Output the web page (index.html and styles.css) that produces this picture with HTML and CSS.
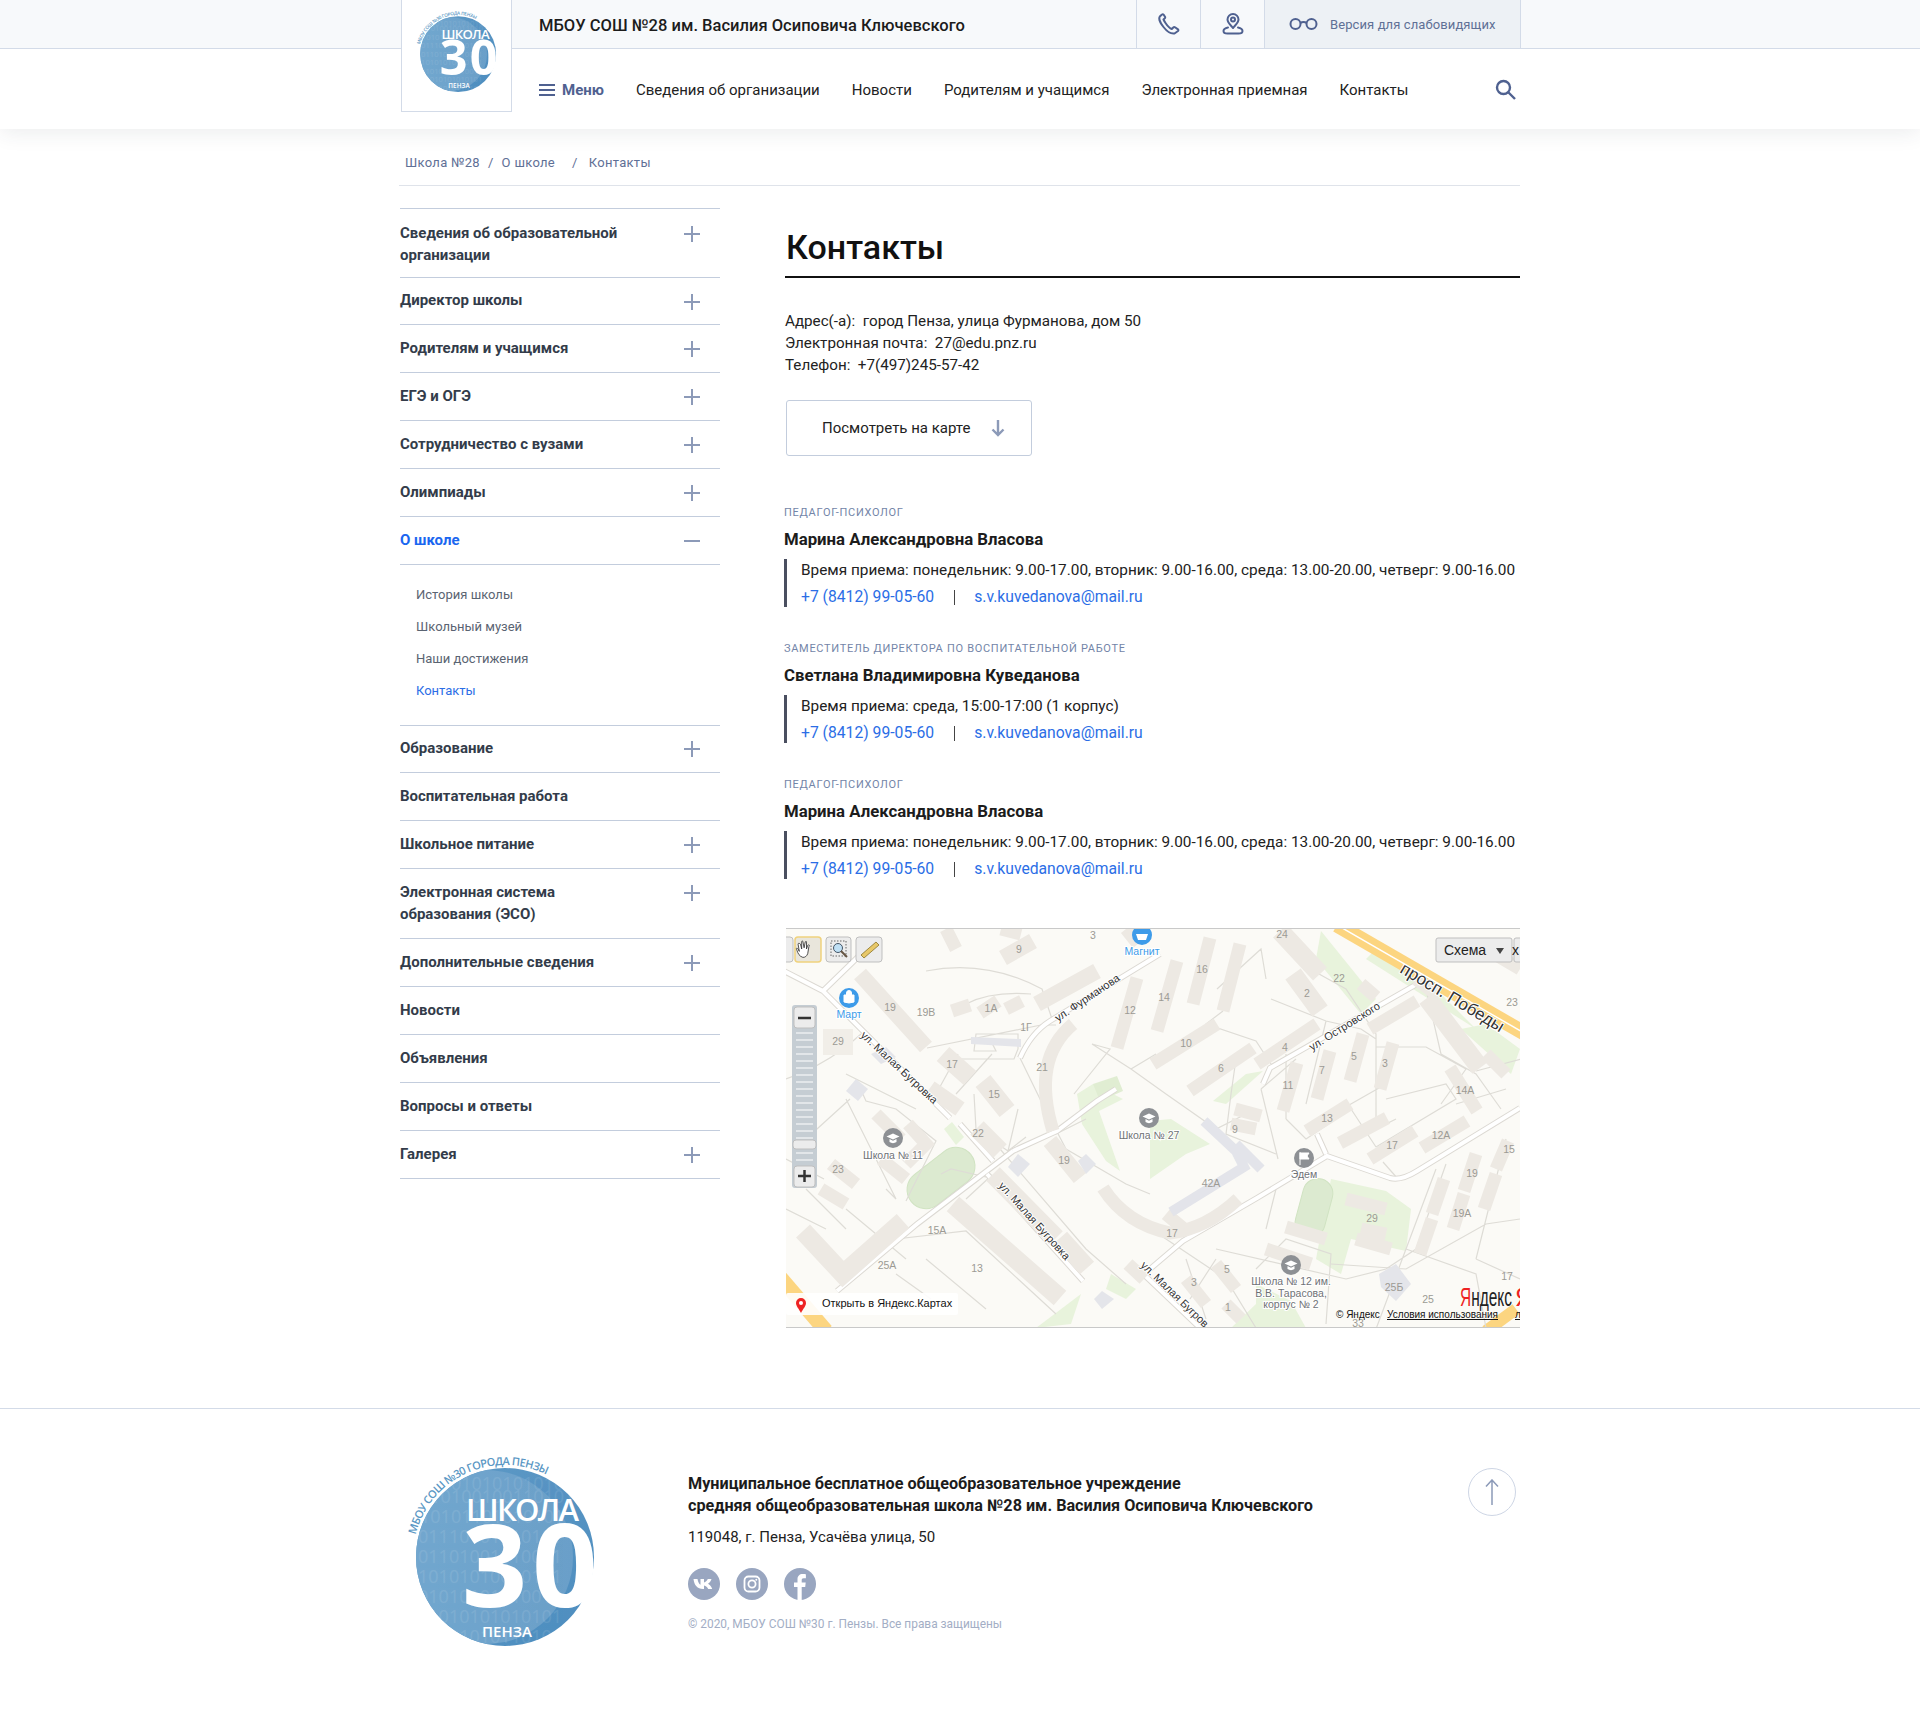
FILE: index.html
```html
<!DOCTYPE html>
<html lang="ru">
<head>
  <meta charset="UTF-8" />
  <title>Контакты - Школа №28</title>
  <meta name="viewport" content="width=device-width, initial-scale=1.0"/>
  <link rel="stylesheet" href="styles.css">
</head>
<body>

<svg class="defs" width="0" height="0">
  <defs>
    <linearGradient id="logoBase" x1="0" y1="0" x2="1" y2="1">
      <stop offset="0" stop-color="#5f9ac6"/>
      <stop offset="1" stop-color="#4d8dbf"/>
    </linearGradient>
    <linearGradient id="logoLight" x1="0" y1="0" x2="1" y2="0">
      <stop offset="0" stop-color="#74a8cf"/>
      <stop offset="1" stop-color="#6a9fc9"/>
    </linearGradient>
    <clipPath id="logoClip"><circle cx="115" cy="127" r="89"/></clipPath>
    <path id="logoArc" d="M25.700 104.700A92 92 0 0 1 156.800 45"/>
    <symbol id="logo" viewBox="0 0 220 230">
      <circle cx="115" cy="127" r="89" fill="url(#logoBase)"/>
      <g clip-path="url(#logoClip)">
        <circle cx="96" cy="127" r="87" fill="url(#logoLight)"/>
        <g class="logo-bits">
          <text x="30" y="60">101010101010101</text>
          <text x="30" y="73">010100100110101</text>
          <text x="30" y="93">10101101010101</text>
          <text x="28" y="113">01110101010101</text>
          <text x="28" y="133">01101001010001</text>
          <text x="28" y="153">10101010010101</text>
          <text x="28" y="173">01010101010010</text>
          <text x="28" y="193">11010101010101</text>
          <text x="28" y="213">10101010110101</text>
        </g>
      </g>
      <text class="logo-arc"><textPath href="#logoArc" textLength="165">МБОУ СОШ №30 ГОРОДА ПЕНЗЫ</textPath></text>
      <text class="logo-word" x="76" y="91" textLength="113">ШКОЛА</text>
      <text class="logo-num" x="72" y="177">30</text>
      <text class="logo-city" x="92" y="207" textLength="50">ПЕНЗА</text>
    </symbol>
    <symbol id="plus" viewBox="0 0 16 16"><path d="M8 0V16M0 8H16" fill="none" stroke="#8c9ab8" stroke-width="2"/></symbol>
    <symbol id="minus" viewBox="0 0 16 16"><path d="M0 8H16" fill="none" stroke="#8c9ab8" stroke-width="2"/></symbol>
    <symbol id="mapCap" viewBox="0 0 20 20">
      <circle cx="10" cy="10" r="10" fill="#8d9094"/>
      <path d="M3.500 8.500 10 5.500l6.500 3L10 11.500zM6.500 11v3c2 1.500 5 1.500 7 0v-3l-3.500 1.700z" fill="#fff"/>
    </symbol>
    <path id="mainRoads" d="M37 62 164 189M174 195 207 232M201 245 297 352M374 25 264 92Q245 104 234 129M227 222 131 295 51 362M227 222 271 202 311 172 330 160M631 55 484 139 477 155M734 179 631 242Q615 252 604 249L541 227 471 269 397 312 364 340M-6 40 37 62 73 27M351 339 414 399M540 225 531 205"/>
  </defs>
</svg>

<header class="site-header">
  <div class="header-inner">
    <a class="logo-box" href="#"><svg class="logo-small"><use href="#logo"/></svg></a>
    <div class="topbar">
      <div class="school-name">МБОУ СОШ №28 им. Василия Осиповича Ключевского</div>
      <a class="top-cell" href="#">
        <svg width="22" height="22" viewBox="0 0 22 22" fill="none" stroke="#4f6190" stroke-width="2" stroke-linecap="round" stroke-linejoin="round"><path d="M4 1.500 1.800 3.500C.8 5 1.500 9 5.500 14c3.500 4.500 8 7 11 6.500l3.500-2.500c.5-.5.5-1.200 0-1.600l-3-2.100c-.6-.4-1.200-.3-1.700.2l-1.500 1.500C12 15.500 9.500 13 7.500 10 6.200 8 5.500 6.500 5.500 6.500l1.300-1.200c.5-.5.5-1 .2-1.500L5.500 1.500C5.100 1 4.500 1 4 1.500z"/></svg>
      </a>
      <a class="top-cell" href="#">
        <svg width="22" height="22" viewBox="0 0 22 22" fill="none" stroke="#4f6190" stroke-width="2" stroke-linecap="round" stroke-linejoin="round"><path d="M11 15C8 11.500 5.500 9.500 5.500 6.500a5.500 5.500 0 0 1 11 0C16.500 9.500 14 11.500 11 15z"/><circle cx="11" cy="6.500" r="2"/><path d="M6 14.500C3.500 15 1.500 16.500 1.500 18c0 1.500 2 2.500 4 2.500h11c2 0 4-1 4-2.500 0-1.500-2-3-4.500-3.500"/></svg>
      </a>
      <a class="vision-cell" href="#">
        <svg width="29" height="14" viewBox="0 0 29 14" fill="none" stroke="#4f6190" stroke-width="2"><circle cx="6.500" cy="7" r="5"/><circle cx="22.500" cy="7" r="5"/><path d="M11.500 6C13 4.500 16 4.500 17.500 6"/></svg>
        <span>Версия для слабовидящих</span>
      </a>
    </div>
    <nav class="main-nav">
      <a class="menu-btn" href="#">
        <svg width="16" height="14" viewBox="0 0 16 14" fill="none" stroke="#4f6190" stroke-width="2"><path d="M0 2H16M0 7H16M0 12H16"/></svg>
        Меню
      </a>
      <a href="#">Сведения об организации</a>
      <a href="#">Новости</a>
      <a href="#">Родителям и учащимся</a>
      <a href="#">Электронная приемная</a>
      <a href="#">Контакты</a>
      <a class="search-btn" href="#">
        <svg width="21" height="21" viewBox="0 0 21 21" fill="none" stroke="#4f6190" stroke-width="2.400"><circle cx="8.500" cy="8.500" r="6.500"/><path d="M13.500 13.500 20 20"/></svg>
      </a>
    </nav>
  </div>
</header>

<div class="page">
  <div class="breadcrumbs">
    <a href="#">Школа №28</a><span class="sep">/</span><a href="#">О школе</a><span class="sep wide">/</span><a href="#">Контакты</a>
  </div>

  <div class="columns">
    <aside class="sidebar">
      <div class="side-item first"><a href="#">Сведения об образовательной организации</a><svg class="toggle"><use href="#plus"/></svg></div>
      <div class="side-item short nudge"><a href="#">Директор школы</a><svg class="toggle"><use href="#plus"/></svg></div>
      <div class="side-item"><a href="#">Родителям и учащимся</a><svg class="toggle"><use href="#plus"/></svg></div>
      <div class="side-item"><a href="#">ЕГЭ и ОГЭ</a><svg class="toggle"><use href="#plus"/></svg></div>
      <div class="side-item"><a href="#">Сотрудничество с вузами</a><svg class="toggle"><use href="#plus"/></svg></div>
      <div class="side-item"><a href="#">Олимпиады</a><svg class="toggle"><use href="#plus"/></svg></div>
      <div class="side-item active"><a href="#">О школе</a><svg class="toggle"><use href="#minus"/></svg></div>
      <ul class="side-sub">
        <li><a href="#">История школы</a></li>
        <li><a href="#">Школьный музей</a></li>
        <li><a href="#">Наши достижения</a></li>
        <li class="current"><a href="#">Контакты</a></li>
      </ul>
      <div class="side-item short"><a href="#">Образование</a><svg class="toggle"><use href="#plus"/></svg></div>
      <div class="side-item"><a href="#">Воспитательная работа</a></div>
      <div class="side-item"><a href="#">Школьное питание</a><svg class="toggle"><use href="#plus"/></svg></div>
      <div class="side-item"><a href="#">Электронная система образования (ЭСО)</a><svg class="toggle"><use href="#plus"/></svg></div>
      <div class="side-item"><a href="#">Дополнительные сведения</a><svg class="toggle"><use href="#plus"/></svg></div>
      <div class="side-item"><a href="#">Новости</a></div>
      <div class="side-item"><a href="#">Объявления</a></div>
      <div class="side-item"><a href="#">Вопросы и ответы</a></div>
      <div class="side-item"><a href="#">Галерея</a><svg class="toggle"><use href="#plus"/></svg></div>
    </aside>

    <main class="content">
      <h1>Контакты</h1>
      <div class="address">
        <div>Адрес(-а):&nbsp; город Пенза, улица Фурманова, дом 50</div>
        <div>Электронная почта:&nbsp; 27@edu.pnz.ru</div>
        <div>Телефон:&nbsp; +7(497)245-57-42</div>
      </div>
      <a class="map-btn" href="#">
        Посмотреть на карте
        <svg width="14" height="18" viewBox="0 0 14 18" fill="none" stroke="#8c9ab8" stroke-width="2.400"><path d="M7 1V16M1.500 10.500 7 16l5.500-5.500"/></svg>
      </a>

      <section class="person">
        <div class="person-role">Педагог-психолог</div>
        <div class="person-name">Марина Александровна Власова</div>
        <div class="person-info">
          <div>Время приема: понедельник: 9.00-17.00, вторник: 9.00-16.00, среда: 13.00-20.00, четверг: 9.00-16.00</div>
          <div class="person-links"><a href="#">+7 (8412) 99-05-60</a><a href="#">s.v.kuvedanova@mail.ru</a></div>
        </div>
      </section>
      <section class="person">
        <div class="person-role">Заместитель директора по воспитательной работе</div>
        <div class="person-name">Светлана Владимировна Куведанова</div>
        <div class="person-info">
          <div>Время приема: среда, 15:00-17:00 (1 корпус)</div>
          <div class="person-links"><a href="#">+7 (8412) 99-05-60</a><a href="#">s.v.kuvedanova@mail.ru</a></div>
        </div>
      </section>
      <section class="person">
        <div class="person-role">Педагог-психолог</div>
        <div class="person-name">Марина Александровна Власова</div>
        <div class="person-info">
          <div>Время приема: понедельник: 9.00-17.00, вторник: 9.00-16.00, среда: 13.00-20.00, четверг: 9.00-16.00</div>
          <div class="person-links"><a href="#">+7 (8412) 99-05-60</a><a href="#">s.v.kuvedanova@mail.ru</a></div>
        </div>
      </section>

      <div class="map">
        <svg width="735" height="399" viewBox="0 0 735 399">
          <!-- green -->
          <g fill="#e8f3dc">
            <path d="M291 165 307 155 337 170 313 182 334 242 320 232 296 195z"/>
            <path d="M364 192 385 190 424 215 400 225 364 250z"/>
            <path d="M427 172 460 145 477 142 440 175z"/>
            <path d="M545 250 600 262 625 280 620 322 565 310 555 345 530 330z"/>
            <path d="M535 2 590 70 575 85 530 30z"/>
            <path d="M580 30 690 100 640 50 590 20z"/>
            <path d="M675 100 725 145 734 120 700 95z"/>
            <path d="M158 200 170 216 178 208 166 193z"/>
            <path d="M445 399 470 375 470 355 505 372 520 399z"/>
            <path d="M250 399 295 365 285 395z"/>
            <path d="M325 345 350 360 340 370 320 360z"/>
          </g>
          <g fill="#dcead0" stroke="#d0e3c2">
            <rect x="-19" y="-38" width="38" height="76" rx="19" transform="translate(155 249) rotate(52)"/>
            <rect x="-15" y="-30" width="30" height="60" rx="15" transform="translate(528 279) rotate(15)"/>
          </g>
          <path d="M307 155 331 147 337 162 314 172z" fill="#e0edd2"/>

          <!-- highway -->
          <path d="M551 -4 738 104" stroke="#fcd580" stroke-width="15" fill="none"/>
          <path d="M551 -4 738 104" stroke="#fff" stroke-width="1.500" fill="none"/>
          <path d="M-8 346 40 402" stroke="#fcd580" stroke-width="15" fill="none"/>
          <path d="M700 402 730 380" stroke="#fcd580" stroke-width="12" fill="none"/>

          <!-- paths -->
          <g class="map-thin">
            <path d="M140 42Q200 30 256 60L266 90M180 75Q205 62 245 65M141 119 255 96 270 96M0 150Q30 140 60 118L75 105M70 150 80 172 110 180 150 212 120 272M130 180 60 145M64 170 20 210M60 170 110 270 100 260M172 125 150 165M206 125 170 165M188 165 190 200 222 222M232 180 222 222 240 208M234 129 255 172 280 220 340 255 364 265M306 115 324 120 300 150 288 165M306 115 345 140 380 165M345 140 370 125M270 205 300 190M168 130 228 130 232 120 232 105 190 105 188 122 210 122 205 112 213 112M214 220 300 320 340 355M155 245 165 240 200 248M206 246 180 270M60 280 120 330M20 260 60 300M0 230 38 250M60 340 110 310 180 302 270 385M110 345 145 370M140 330 200 380M0 280 40 300"/>
            <path d="M431 60 475 20 480 50M437 82 420 95 470 112 485 135M533 45 560 60 590 105 590 200 610 190M485 70 540 92 575 100 590 110M540 92 520 175M590 118 640 118 680 140 655 175M640 60 655 125M655 125 690 145 715 180M690 142 735 130M600 170 660 155 670 170 590 218M670 175 720 160M590 218 565 180 520 210 500 190M450 130 445 165 440 205 490 225M475 160 492 230M475 160 510 130M380 165 430 200 470 180M500 190 500 125M521 200 600 155M597 233 612 250M650 240 620 320 590 400M720 210 690 330M690 330 734 350M660 235 630 320 600 340 560 350 430 320M480 300 490 260M620 320 690 345 700 399M430 330 404 370M400 330 420 390M365 300 440 350 470 399M470 340 500 310 545 325 540 395M545 335 620 340 700 295 734 290"/>
          </g>

          <!-- roads -->
          <use href="#mainRoads" class="road-edge"/>
          <use href="#mainRoads" class="road-fill"/>

          <!-- buildings -->
          <g class="map-bld">
            <path class="b17" d="M74 45 140 118M217 29 247 12M251 75 311 42M264 212 294 249M144 159 174 180"/>
            <path class="b14" d="M166 82 184 76M194 84 212 72M220 80 236 72M331 119 351 49M391 32 371 102M424 9 407 75M454 15 437 82M367 135 431 95M404 162 467 119M471 135 531 95M577 105 564 152M607 114 594 160M544 122 531 170M511 134 497 182M631 72 584 100M564 175 521 202M601 189 554 214M629 202 584 230M681 192 636 219M664 139 691 182M722 212 710 240M710 245 698 280M690 225 678 262M678 265 667 300M658 250 646 285M646 290 634 325"/>
            <path class="b20" d="M157 125 184 149M197 152 221 182M191 199 214 222M641 69 694 139M494 2 534 45M507 45 534 82"/>
            <path class="b20" d="M17 302 57 345 117 292M167 275 274 369M207 245 270 309M274 309 301 339"/>
            <path class="b14" d="M287 95Q245 130 267 202M317 259Q340 295 384 304 420 300 452 270"/>
            <path class="b14" d="M90 185 115 210M122 195 140 215 120 235M95 230 120 250M45 235 70 255M35 260 60 275M380 285 398 300M342 335 358 350M500 298 540 310M480 320 525 335M430 335 450 360M400 350 420 375M440 375 455 390M215 0 235 5M340 0 352 15M160 0 170 20M575 55 590 68M630 50 650 65M700 20 734 40M700 125 720 145"/>
            <path class="b14" d="M449 180 475 187M445 195 470 200M560 270 600 280M575 300 600 305M570 310 605 320"/>
            <rect x="37" y="100" width="30" height="26" fill="#f1eee8"/>
          </g>

          <!-- grey-blue blocks -->
          <path d="M418 192 450 222 458 238 385 283M450 215 475 240" fill="none" stroke="#e3e4ea" stroke-width="10"/>
          <g fill="#e4e5ea">
            <path d="M593 345 610 335 625 355 610 372 595 358z"/>
            <path d="M100 118 110 128 95 135 85 125zM185 108 235 110 235 118 185 115z"/>
            <path d="M232 225 244 235 232 248 222 238z"/>
            <path d="M70 150 82 160 72 172 60 162z"/>
            <path d="M300 225 310 235 300 245 292 232z"/>
            <path d="M316 362 328 370 316 380 308 370z"/>
          </g>

          <!-- labels -->
          <g class="map-num">
            <text x="104" y="82">19</text><text x="140" y="87">19В</text><text x="205" y="83">1А</text><text x="240" y="102">1Г</text>
            <text x="52" y="116">29</text><text x="166" y="139">17</text><text x="208" y="169">15</text><text x="256" y="142">21</text>
            <text x="344" y="85">12</text><text x="192" y="208">22</text><text x="278" y="235">19</text><text x="52" y="244">23</text>
            <text x="151" y="305">15А</text><text x="101" y="340">25А</text><text x="191" y="343">13</text><text x="233" y="24">9</text>
            <text x="307" y="10">3</text><text x="496" y="9">24</text><text x="416" y="44">16</text><text x="378" y="72">14</text>
            <text x="553" y="53">22</text><text x="521" y="68">2</text><text x="726" y="77">23</text><text x="400" y="118">10</text>
            <text x="435" y="143">6</text><text x="499" y="122">4</text><text x="568" y="131">5</text><text x="599" y="138">3</text>
            <text x="536" y="145">7</text><text x="502" y="160">11</text><text x="679" y="165">14А</text><text x="541" y="193">13</text>
            <text x="449" y="204">9</text><text x="606" y="220">17</text><text x="655" y="210">12А</text><text x="723" y="224">15</text>
            <text x="686" y="248">19</text><text x="425" y="258">42А</text><text x="676" y="288">19А</text><text x="586" y="293">29</text>
            <text x="386" y="308">17</text><text x="608" y="362">25Б</text><text x="441" y="344">5</text><text x="408" y="357">3</text>
            <text x="442" y="382">1</text><text x="721" y="351">17</text><text x="642" y="374">25</text><text x="572" y="398">33</text>
          </g>
          <g class="map-street">
            <text transform="translate(74 107) rotate(43)">ул. Малая Бугровка</text>
            <text transform="translate(212 257) rotate(48)">ул. Малая Бугровка</text>
            <text transform="translate(354 337) rotate(44)">ул. Малая Бугров</text>
            <text transform="translate(272 93) rotate(-34)">ул. Фурманова</text>
            <text transform="translate(526 122) rotate(-32)">ул. Островского</text>
            <text class="avenue" transform="translate(613 43) rotate(31)">просп. Победы</text>
          </g>
          <g class="map-poi">
            <use href="#mapCap" x="97" y="199" width="20" height="20"/><text x="107" y="230">Школа № 11</text>
            <use href="#mapCap" x="353" y="179" width="20" height="20"/><text x="363" y="210">Школа № 27</text>
            <use href="#mapCap" x="495" y="326" width="20" height="20"/>
            <text x="505" y="356">Школа № 12 им.</text><text x="505" y="368">В.В. Тарасова,</text><text x="505" y="379">корпус № 2</text>
            <circle cx="518" cy="229" r="10" fill="#8d9094"/><path d="M514 223v13M514 224h9l-2 3 2 3h-9z" fill="#fff" stroke="#fff"/>
            <text x="518" y="249">Эдем</text>
          </g>
          <g class="map-shop">
            <circle cx="63" cy="69" r="10" fill="#3d9be9"/><path d="M58 66h10v7q-5 2-10 0zM60.500 66v-2a2.500 2.500 0 0 1 5 0v2" fill="#fff" stroke="#fff"/>
            <text x="63" y="89">Март</text>
            <circle cx="356" cy="6" r="10" fill="#3d9be9"/><path d="M350 5h12l-2 6h-8z" fill="#fff"/>
            <text x="356" y="26">Магнит</text>
          </g>

          <!-- controls -->
          <g class="map-ctrl">
            <rect x="-20" y="8" width="27" height="25" rx="3"/>
            <rect x="9" y="8" width="26" height="25" rx="3" class="on"/>
            <rect x="40" y="8" width="25" height="25" rx="3"/>
            <rect x="70" y="8" width="26" height="25" rx="3"/>
          </g>
          <path transform="translate(-3.500 -4) scale(1.200)" d="M17 27c-3-1-4-3-5-6-1-2 0-2 1-1l1 2-1-6c0-1 1-1 2 0l1 4v-6c0-1 1-1 1 0l1 5 1-5c1-1 1 0 1 1l0 5 1-3c1-1 2 0 1 1l-1 6c-1 2-2 3-4 3z" fill="#fff" stroke="#333" stroke-width=".7"/>
          <rect x="45" y="12" width="15" height="15" fill="none" stroke="#666" stroke-dasharray="1.500 1.500"/>
          <circle cx="52" cy="19" r="4.500" fill="#bfe0f5" stroke="#456"/><path d="M55 22 61 28" stroke="#654" stroke-width="2"/>
          <path d="M75 26 90 13 93 16 78 29z" fill="#e8c869" stroke="#8a7428" stroke-width=".8"/>
          <rect x="6" y="76" width="25" height="183" rx="3" fill="#c5cdd3"/>
          <path class="map-ticks" d="M10 104H27M10 111H27M10 118H27M10 125H27M10 132H27M10 139H27M10 146H27M10 153H27M10 160H27M10 167H27M10 174H27M10 181H27M10 188H27M10 195H27M10 202H27M10 209H27M10 224H27M10 231H27"/>
          <g class="map-ctrl">
            <rect x="8" y="78" width="21" height="21" rx="3"/>
            <rect x="8" y="237" width="21" height="21" rx="3"/>
            <rect x="7" y="211" width="23" height="9" rx="3"/>
          </g>
          <path d="M12 89H25M12 247H25M18.500 241V253" stroke="#333" stroke-width="2.500" fill="none"/>
          <rect x="0" y="364" width="172" height="22" rx="2" fill="#fff" opacity=".9"/>
          <path d="M15 384c-2-4-5-7-5-10a5 5 0 0 1 10 0c0 3-3 6-5 10z" fill="#e22"/><circle cx="15" cy="374" r="2" fill="#fff"/>
          <text class="map-open" x="36" y="378">Открыть в Яндекс.Картах</text>
          <g class="map-ctrl">
            <rect x="650" y="9" width="76" height="24" rx="2"/>
            <rect x="728" y="9" width="20" height="24" rx="2"/>
          </g>
          <text class="map-type" x="658" y="26">Схема</text>
          <path d="M710 19H718L714 25z" fill="#444"/>
          <text class="map-type" x="726" y="26">x</text>
          <text class="map-brand" x="674" y="377" textLength="52" lengthAdjust="spacingAndGlyphs"><tspan fill="#e22">Я</tspan>ндекс</text>
          <text class="map-brand brand-cut" x="729" y="377">Я</text>
          <text class="map-copy" x="550" y="389">© Яндекс</text>
          <text class="map-copy terms" x="601" y="389">Условия использования</text>
          <text class="map-copy terms" x="729" y="389">л</text>
        </svg>
      </div>
    </main>
  </div>
</div>

<footer class="site-footer">
  <div class="footer-inner">
    <svg class="logo-big"><use href="#logo"/></svg>
    <div class="footer-text">
      <div class="footer-title">Муниципальное бесплатное общеобразовательное учреждение<br>средняя общеобразовательная школа №28 им. Василия Осиповича Ключевского</div>
      <div class="footer-addr">119048, г. Пенза, Усачёва улица, 50</div>
      <div class="socials">
        <a href="#"><svg width="32" height="32" viewBox="0 0 32 32"><circle cx="16" cy="16" r="16" fill="#99a6c0"/><path d="M5.500 11h4c.5 3 2 5.500 3 5.800V11h3.500v3.500c1.500-.2 3-2 3.800-3.500h3.700c-.5 2.200-2.300 4-3.500 4.800 1.300.7 3.300 2.500 4.200 5.200h-4c-.7-1.700-2.300-3.200-4.200-3.400V21H15c-5.500 0-8.800-3.700-9.500-10z" fill="#fff"/></svg></a>
        <a href="#"><svg width="32" height="32" viewBox="0 0 32 32"><circle cx="16" cy="16" r="16" fill="#99a6c0"/><rect x="8.500" y="8.500" width="15" height="15" rx="4" fill="none" stroke="#fff" stroke-width="1.800"/><circle cx="16" cy="16" r="3.600" fill="none" stroke="#fff" stroke-width="1.800"/><circle cx="20.300" cy="11.700" r="1" fill="#fff"/></svg></a>
        <a href="#"><svg width="32" height="32" viewBox="0 0 32 32"><circle cx="16" cy="16" r="16" fill="#99a6c0"/><path d="M13.500 32V19H10v-4.500h3.500v-3.200C13.500 8 15.500 6 18.700 6c1.500 0 2.800.1 3.200.2v4h-2.200c-1.700 0-2 .8-2 2v2.300h4L21.200 19h-3.500v13z" fill="#fff"/></svg></a>
      </div>
      <div class="copyright">© 2020, МБОУ СОШ №30 г. Пензы. Все права защищены</div>
    </div>
    <a class="to-top" href="#">
      <svg width="14" height="26" viewBox="0 0 14 26" fill="none" stroke="#8c9ab8" stroke-width="1.500"><path d="M7 26V1M1 7.500 7 1l6 6.500"/></svg>
    </a>
  </div>
</footer>

</body>
</html>
```

FILE: styles.css
```css
* {
  box-sizing: border-box;
}

body {
  margin: 0;
  font-family: Roboto, "Noto Sans", sans-serif;
  font-size: 15px;
  line-height: 22px;
  color: #222;
  background: #fff;
}

a {
  color: inherit;
  text-decoration: none;
}

.defs {
  position: absolute;
}

/* header */
.site-header {
  height: 129px;
  background: linear-gradient(#f7f9fb 48px, #d3dbe8 48px, #d3dbe8 49px, #fff 49px);
  box-shadow: 0 4px 20px rgba(40, 50, 70, 0.09);
  position: relative;
}

.header-inner {
  width: 1120px;
  margin-left: 401px;
  display: grid;
  grid-template-columns: 111px 1fr;
  grid-template-rows: 49px 80px;
}

.logo-box {
  grid-row: 1 / 3;
  height: 112px;
  padding-left: 7px;
  background: #fff;
  border: 1px solid #d3dbe8;
  border-top: 0;
}

.logo-small {
  width: 94px;
  height: 98px;
  display: block;
}

.topbar {
  display: flex;
  align-items: stretch;
  height: 48px;
}

.school-name {
  flex: 1;
  padding-left: 27px;
  font-size: 16.55px;
  font-weight: 500;
  line-height: 52px;
  color: #1c1c1c;
}

.top-cell {
  width: 64px;
  display: flex;
  align-items: center;
  justify-content: center;
  border-left: 1px solid #d3dbe8;
}

.vision-cell {
  width: 257px;
  display: flex;
  align-items: center;
  gap: 12px;
  padding-left: 24px;
  background: #edf1f5;
  border-left: 1px solid #d3dbe8;
  border-right: 1px solid #d3dbe8;
  color: #5f7096;
  font-size: 13px;
  letter-spacing: 0.1px;
}

.vision-cell span {
  padding-top: 2px;
}

.main-nav {
  display: flex;
  align-items: center;
  padding: 2px 0 0 27px;
  gap: 32px;
  font-size: 15px;
  color: #222;
}

.menu-btn {
  display: flex;
  align-items: center;
  gap: 7px;
  font-weight: 700;
  color: #4f6190;
}

.search-btn {
  margin: -2px 5px 0 auto;
  height: 21px;
}

/* page */
.page {
  width: 1121px;
  margin-left: 399px;
}

.breadcrumbs {
  height: 57px;
  padding: 23px 0 0 6px;
  border-bottom: 1px solid #dfe3ea;
  font-size: 13px;
  color: #5f7096;
  letter-spacing: 0.3px;
}

.sep {
  margin: 0 8px;
}

.sep.wide {
  margin: 0 11px 0 17px;
}

.columns {
  display: grid;
  grid-template-columns: 320px 735px;
  column-gap: 65px;
  padding: 22px 0 0 1px;
}

/* sidebar */
.sidebar {
  border-top: 1px solid #c3cddd;
  align-self: start;
}

.side-item {
  display: flex;
  justify-content: space-between;
  align-items: flex-start;
  padding: 12px 20px 13px 0;
  border-bottom: 1px solid #c3cddd;
  font-size: 15px;
  font-weight: 700;
  color: #333c4a;
}

.side-item a {
  width: 240px;
}

.side-item.first {
  padding: 13px 20px 11px 0;
}

.side-item.short {
  padding: 11px 20px 13px 0;
}

.side-item.active {
  color: #1a66f0;
}

.toggle {
  width: 16px;
  height: 16px;
  margin-top: 4px;
}

.nudge .toggle {
  margin-top: 5px;
}

.side-sub {
  list-style: none;
  margin: 0;
  padding: 14px 0 18px 16px;
  border-bottom: 1px solid #c3cddd;
  font-size: 13px;
  color: #5a6472;
}

.side-sub li {
  height: 32px;
  line-height: 32px;
}

.side-sub .current {
  color: #2b6ee6;
}

/* content */
.content h1 {
  margin: 17px 0 0;
  height: 53px;
  padding: 0 0 7px 1px;
  font-size: 34px;
  line-height: 44px;
  font-weight: 500;
  color: #111;
  border-bottom: 2px solid #111;
}

.address {
  margin-top: 32px;
  font-size: 15.2px;
}

.map-btn {
  margin: 24px 0 48px 1px;
  width: 246px;
  height: 56px;
  padding: 0 26px 0 35px;
  display: flex;
  align-items: center;
  justify-content: space-between;
  border: 1px solid #c3cddd;
  border-radius: 3px;
}

.person {
  margin: 0 0 33px -1px;
}

.person-role {
  padding-top: 1px;
  height: 16px;
  font-size: 11px;
  line-height: 16px;
  text-transform: uppercase;
  letter-spacing: 0.7px;
  color: #7385a8;
}

.person-name {
  margin: 8px 0 9px;
  font-size: 16.8px;
  font-weight: 700;
  color: #1c1c1c;
}

.person-info {
  padding-left: 14px;
  border-left: 3px solid #4a4f60;
  font-size: 15.35px;
}

.person-links {
  margin-top: 5px;
  height: 21px;
  display: flex;
  font-size: 15.7px;
  color: #2b6ee6;
}

.person-links a + a {
  margin-left: 20px;
  padding-left: 20px;
  position: relative;
}

.person-links a + a::before {
  content: "";
  position: absolute;
  left: 0;
  top: 4px;
  height: 15px;
  border-left: 1px solid #444;
}

.map {
  margin-top: 49px;
  margin-left: 1px;
  width: 734px;
  height: 400px;
  overflow: hidden;
  background: #fbfaf6;
  border-top: 1px solid #c9c9c9;
  border-bottom: 1px solid #c9c9c9;
}

.map svg {
  display: block;
}

.map text {
  font-family: "Liberation Sans", sans-serif;
}

.map-thin path {
  fill: none;
  stroke: #dedcd6;
  stroke-width: 1.2;
}

.road-edge {
  fill: none;
  stroke: #dcd9d3;
  stroke-width: 6;
}

.road-fill {
  fill: none;
  stroke: #fff;
  stroke-width: 4;
}

.map-bld path {
  fill: none;
  stroke: #ede9e3;
}

.b14 {
  stroke-width: 13;
}

.b17 {
  stroke-width: 16;
}

.b20 {
  stroke-width: 19;
}

.map-num text {
  font-size: 10.5px;
  fill: #9c9a94;
  text-anchor: middle;
}

.map-street text {
  font-size: 11px;
  fill: #333;
  stroke: #fff;
  stroke-width: 2px;
  paint-order: stroke;
}

.map-street .avenue {
  font-size: 17px;
}

.map-poi text {
  font-size: 10.5px;
  fill: #6f7276;
  text-anchor: middle;
  stroke: #fff;
  stroke-width: 2px;
  paint-order: stroke;
}

.map-shop text {
  font-size: 10.5px;
  fill: #3d9be9;
  text-anchor: middle;
  stroke: #fff;
  stroke-width: 2px;
  paint-order: stroke;
}

.map-ctrl rect {
  fill: #ececec;
  stroke: #bfbfbf;
}

.map-ctrl .on {
  fill: #e9e6dc;
  stroke: #f0d27d;
  stroke-width: 1.5;
}

.map-ticks {
  stroke: #fff;
  stroke-width: 1.2;
  fill: none;
}

.map-open {
  font-size: 11px;
  fill: #111;
}

.map-type {
  font-size: 14px;
  fill: #222;
}

.map text.map-brand {
  font-size: 25px;
  fill: #222;
  font-family: "Liberation Sans Narrow", "Liberation Sans", sans-serif;
}

.map text.brand-cut {
  fill: #e22;
}

.map-copy {
  font-size: 10px;
  fill: #111;
}

.map-copy.terms {
  text-decoration: underline;
}

/* logo */
.logo-bits text {
  font-family: "Open Sans", sans-serif;
  font-size: 18px;
  fill: #fff;
  opacity: 0.09;
}

.logo-arc {
  font-family: "Open Sans", sans-serif;
  font-size: 11px;
  font-weight: 600;
  fill: #5a97c4;
}

.logo-word {
  font-family: "Open Sans", sans-serif;
  font-size: 31px;
  font-weight: 600;
  fill: #fff;
}

.logo-num {
  font-family: "Open Sans", sans-serif;
  font-size: 114px;
  font-weight: 700;
  letter-spacing: 5px;
  fill: #fff;
}

.logo-city {
  font-family: "Open Sans", sans-serif;
  font-size: 15px;
  font-weight: 600;
  fill: #fff;
}

/* footer */
.site-footer {
  margin-top: 80px;
  height: 304px;
  border-top: 1px solid #d3dbe8;
}

.footer-inner {
  width: 1130px;
  margin-left: 390px;
  display: flex;
  align-items: flex-start;
}

.logo-big {
  width: 220px;
  height: 230px;
  margin: 21px 78px 0 0;
  flex: none;
}

.footer-text {
  flex: 1;
  padding-top: 64px;
}

.footer-title {
  font-size: 16.2px;
  font-weight: 700;
  color: #1c1c1c;
}

.footer-addr {
  margin-top: 9px;
}

.socials {
  display: flex;
  gap: 16px;
  margin-top: 20px;
  height: 32px;
}

.copyright {
  margin-top: 16px;
  font-size: 11.9px;
  line-height: 16px;
  color: #a3aec5;
}

.to-top {
  width: 48px;
  height: 48px;
  margin: 59px 4px 0 0;
  border: 1px solid #ced6e5;
  border-radius: 50%;
  display: flex;
  align-items: center;
  justify-content: center;
}
```
